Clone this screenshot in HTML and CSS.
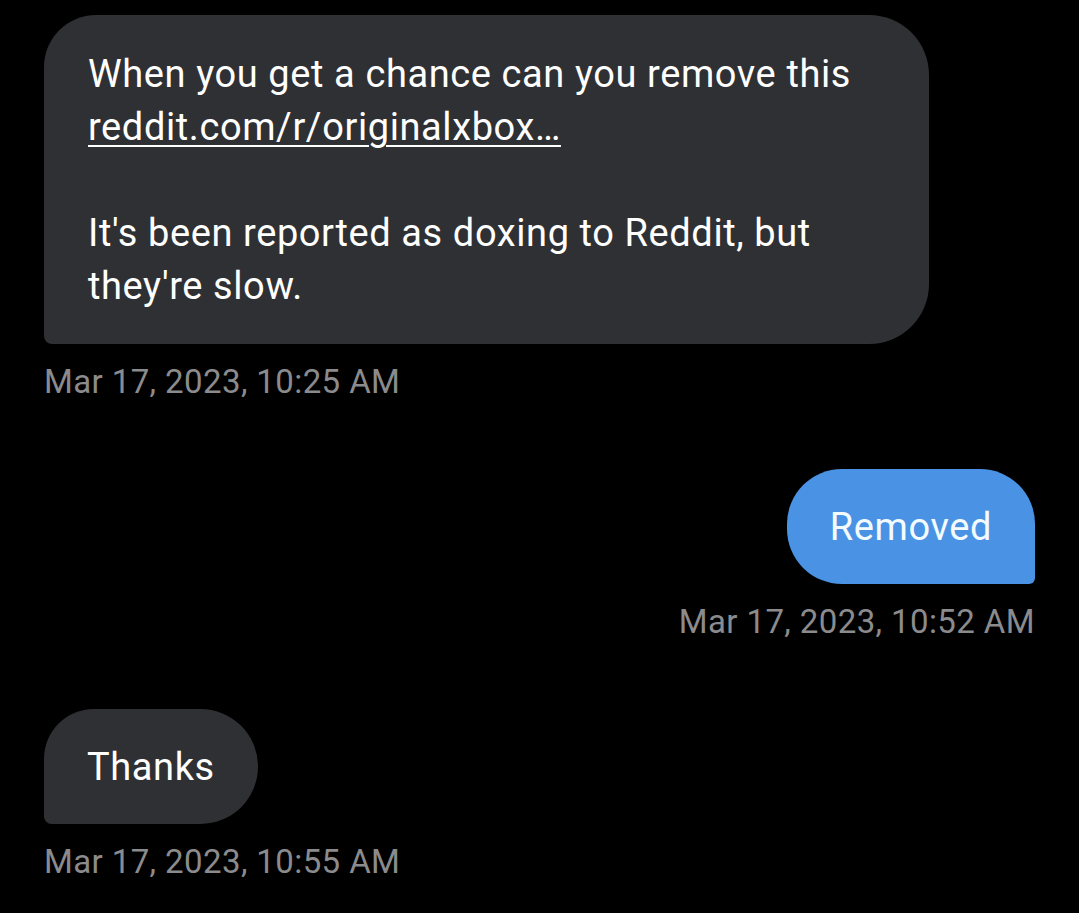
FILE: index.html
```html
<!DOCTYPE html>
<html>
<head>
    <title>Messages</title>
    <meta name="viewport" content="width=device-width, initial-scale=1.0">
    <link rel="stylesheet" href="styles.css">
</head>
<body>
    <div class="chat">
        <div class="msg incoming">
            <div class="bubble big">
                When you get a chance can you remove this<br>
                <a href="#" class="link">reddit.com/r/originalxbox…</a><br>
                <br>
                It's been reported as doxing to Reddit, but they're slow.
            </div>
            <div class="time">Mar 17, 2023, 10:25 AM</div>
        </div>

        <div class="msg outgoing">
            <div class="bubble">Removed</div>
            <div class="time">Mar 17, 2023, 10:52 AM</div>
        </div>

        <div class="msg incoming">
            <div class="bubble">Thanks</div>
            <div class="time">Mar 17, 2023, 10:55 AM</div>
        </div>
    </div>
</body>
</html>
```

FILE: styles.css
```css
body {
    margin: 0;
    background-color: #000000;
    color: #ffffff;
    font-family: Roboto, "Liberation Sans", sans-serif;
}

.chat {
    display: flex;
    flex-direction: column;
    gap: 67px;
    padding: 15px 44px 0 44px;
}

.msg {
    display: flex;
    flex-direction: column;
}
.incoming {align-items: flex-start}
.outgoing {align-items: flex-end}

.bubble {
    box-sizing: border-box;
    max-width: 885px;
    font-size: 38px;
    letter-spacing: 0.6px;
    line-height: 53px;
    padding: 32px 43px 30px 43px;
}
.bubble.big {
    padding: 33px 44px 31px 44px;
}

.incoming .bubble {
    background-color: #2f3034;
    border-radius: 52px 60px 60px 8px;
}
.outgoing .bubble {
    background-color: #4a93e4;
    color: #f4fbff;
    border-radius: 55px 55px 6px 55px;
}

.link {
    color: #ffffff;
    text-decoration: underline;
    text-decoration-thickness: 2px;
    text-underline-offset: 5px;
}

.time {
    margin-top: 18px;
    font-size: 33px;
    letter-spacing: 0.4px;
    line-height: 40px;
    color: #8b8b8d;
}
```
